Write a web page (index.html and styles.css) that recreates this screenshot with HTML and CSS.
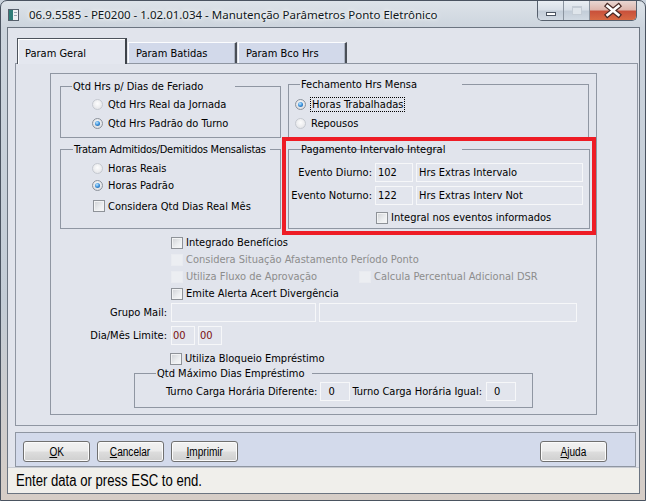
FILE: index.html
```html
<!DOCTYPE html>
<html lang="pt-BR">
<head>
  <meta charset="UTF-8">
  <title>Manutenção Parâmetros Ponto Eletrônico</title>
  <link rel="stylesheet" href="styles.css">
</head>
<body>
  <div class="window">
    <div class="titlebar">
      <svg class="app-icon" viewBox="0 0 11 12" width="11" height="12">
        <rect x="0.5" y="0.5" width="10" height="11" fill="#eef1f4" stroke="#56606c"/>
        <rect x="1" y="1" width="4" height="10" fill="#2f7d78"/>
        <rect x="6" y="3" width="3" height="1" fill="#9aa6b2"/>
        <rect x="6" y="6" width="3" height="1" fill="#9aa6b2"/>
      </svg>
      <span class="title">06.9.5585 - PE0200 - 1.02.01.034 - Manutenção Parâmetros Ponto Eletrônico</span>
      <div class="caption">
        <span class="cap-btn cap-min"><i></i></span>
        <span class="cap-btn cap-max"><i></i></span>
        <span class="cap-btn cap-close">
          <svg viewBox="0 0 46 19" width="46" height="19">
            <path d="M17.5 5 L28.5 14 M28.5 5 L17.5 14" stroke="#4a2a26" stroke-width="5" stroke-linecap="square"/>
            <path d="M17.5 5 L28.5 14 M28.5 5 L17.5 14" stroke="#ffffff" stroke-width="2.6" stroke-linecap="square"/>
          </svg>
        </span>
      </div>
    </div>

    <div class="client">
      <div class="tabs">
        <div class="tab active">Param Geral</div>
        <div class="tab">Param Batidas</div>
        <div class="tab">Param Bco Hrs</div>
      </div>

      <div class="tab-panel">
        <div class="frame">
          <div class="groups">
            <fieldset class="group feriado">
              <legend class="lg-feriado">Qtd Hrs p/ Dias de Feriado</legend>
              <label class="radio"><i></i>Qtd Hrs Real da Jornada</label>
              <label class="radio on"><i></i>Qtd Hrs Padrão do Turno</label>
            </fieldset>

            <fieldset class="group fechamento">
              <legend class="lg-fechamento">Fechamento Hrs Mensa</legend>
              <label class="radio on"><i></i><span class="focus">Horas Trabalhadas</span></label>
              <label class="radio"><i></i>Repousos</label>
            </fieldset>

            <fieldset class="group tratam">
              <legend class="lg-tratam">Tratam Admitidos/Demitidos Mensalistas</legend>
              <label class="radio"><i></i>Horas Reais</label>
              <label class="radio on"><i></i>Horas Padrão</label>
              <label class="check"><i></i>Considera Qtd Dias Real Mês</label>
            </fieldset>

            <fieldset class="group pagamento">
              <legend class="lg-pagamento">Pagamento Intervalo Integral</legend>
              <div class="evento-grid">
                <span class="lbl">Evento Diurno:</span>
                <input class="field" type="text" value="102" readonly>
                <input class="field" type="text" value="Hrs Extras Intervalo" readonly>
                <span class="lbl">Evento Noturno:</span>
                <input class="field" type="text" value="122" readonly>
                <input class="field" type="text" value="Hrs Extras Interv Not" readonly>
                <label class="check integral"><i></i>Integral nos eventos informados</label>
              </div>
            </fieldset>
          </div>

          <div class="options">
            <label class="check"><i></i>Integrado Benefícios</label>
            <label class="check disabled"><i></i>Considera Situação Afastamento Período Ponto</label>
            <div class="opt-pair">
              <label class="check disabled fluxo"><i></i>Utiliza Fluxo de Aprovação</label>
              <label class="check disabled"><i></i>Calcula Percentual Adicional DSR</label>
            </div>
            <label class="check"><i></i>Emite Alerta Acert Divergência</label>
          </div>

          <div class="fields">
            <span class="lbl">Grupo Mail:</span>
            <div class="field-row">
              <input class="field mail-cod" type="text" readonly>
              <input class="field mail-desc" type="text" readonly>
            </div>
            <span class="lbl">Dia/Mês Limite:</span>
            <div class="field-row">
              <input class="field day" type="text" value="00" readonly>
              <input class="field day" type="text" value="00" readonly>
            </div>
          </div>

          <label class="check bloqueio"><i></i>Utiliza Bloqueio Empréstimo</label>

          <fieldset class="group emprestimo">
            <legend class="lg-emprestimo">Qtd Máximo Dias Empréstimo</legend>
            <div class="turno-row">
              <span>Turno Carga Horária Diferente:</span>
              <input class="field num" type="text" value="0" readonly>
              <span class="turno-igual">Turno Carga Horária Igual:</span>
              <input class="field num" type="text" value="0" readonly>
            </div>
          </fieldset>
        </div>
      </div>

      <div class="button-bar">
        <button class="btn"><span><u>O</u>K</span></button>
        <button class="btn"><span><u>C</u>ancelar</span></button>
        <button class="btn"><span><u>I</u>mprimir</span></button>
        <button class="btn help"><span><u>A</u>juda</span></button>
      </div>

      <div class="status"><span>Enter data or press ESC to end.</span></div>
    </div>
  </div>
</body>
</html>
```

FILE: styles.css
```css
* {
  margin: 0;
  padding: 0;
  box-sizing: border-box;
}

html, body {
  width: 646px;
  height: 501px;
  overflow: hidden;
}

body {
  font-family: "DejaVu Sans Condensed", "Liberation Sans", sans-serif;
  font-size: 11px;
  color: #000;
  background: #c9d2dc;
}

.window {
  width: 646px;
  height: 501px;
  display: flex;
  flex-direction: column;
  border: 1px solid #4a5360;
  border-radius: 7px 7px 0 0;
  background: linear-gradient(to bottom, #dde3e9 0, #ccd4dd 27px, #c3ccd6 60%, #d6cdc6 100%);
  overflow: hidden;
}

/* title bar */
.titlebar {
  height: 27px;
  display: flex;
  align-items: center;
  padding-left: 7px;
  flex-shrink: 0;
}

.app-icon {
  display: block;
  margin-top: 1px;
}

.title {
  margin-left: 10px;
  font-family: "Noto Sans", "Open Sans", sans-serif;
  font-size: 11.5px;
  color: #101820;
  text-shadow: 0 0 6px #fff, 0 0 3px #fff;
  white-space: nowrap;
}

.caption {
  display: flex;
  align-self: flex-start;
  margin-left: auto;
  margin-right: 8px;
  border: 1px solid #56606d;
  border-top: none;
  border-radius: 0 0 5px 5px;
  overflow: hidden;
}

.cap-btn {
  height: 19px;
  display: flex;
  align-items: center;
  justify-content: center;
}

.cap-min, .cap-max {
  width: 26px;
  background: linear-gradient(to bottom, #e9eef3 0, #d9e0e8 45%, #c3cdd8 55%, #d1dae3 100%);
  border-right: 1px solid #8a939e;
}

.cap-min i {
  width: 10px;
  height: 4px;
  margin-top: 6px;
  background: #fff;
  border: 1px solid #4b5562;
}

.cap-max i {
  width: 10px;
  height: 9px;
  border: 1px solid #c4ccd5;
  border-top-width: 2px;
  background: #dfe5eb;
}

.cap-close {
  width: 46px;
  background: linear-gradient(to bottom, #e8d6d2 0, #deb7ae 45%, #c9513b 55%, #d86a44 100%);
}

.cap-close svg {
  display: block;
}

/* client area */
.client {
  flex: 1;
  margin: 0 6px 7px 7px;
  display: flex;
  flex-direction: column;
  background: #e1e4ec;
  box-shadow: 0 0 0 1px #6b7480;
}

.tabs {
  display: flex;
  align-items: flex-end;
  height: 25px;
  margin-top: 10px;
  margin-left: 9px;
}

.tab {
  width: 109px;
  height: 21px;
  margin-left: 1px;
  padding: 4px 0 0 7px;
  line-height: 13px;
  background: #d2d9ea;
  border-top: 1px solid #fbfcfe;
  border-left: 1px solid #fbfcfe;
  border-right: 2px solid #4a4f57;
  box-shadow: inset -1px 0 0 #a9b1c1;
}

.tab.active {
  width: 110px;
  height: 26px;
  margin-left: 0;
  margin-bottom: -1px;
  padding-top: 8px;
  background: #e4e7ef;
  border-top: 1px solid #4d535c;
  border-left: 1px solid #4d535c;
  border-right: 2px solid #3e434a;
  box-shadow: inset 1px 1px 0 #fff;
  position: relative;
  z-index: 1;
}

.tab-panel {
  width: 623px;
  height: 363px;
  margin-left: 7px;
  padding: 9px 0 0 34px;
  border: 1px solid #8f96a2;
  background: #e1e4ec;
}

.frame {
  width: 547px;
  height: 342px;
  border: 1px solid #8f96a2;
}

/* group boxes */
.groups {
  display: grid;
  grid-template-columns: 221px 301px;
  column-gap: 7px;
  row-gap: 5px;
  align-items: start;
  padding: 4px 0 0 9px;
}

.group {
  border: 1px solid #8f96a2;
  min-width: 0;
}

.group legend {
  font-size: 11px;
  line-height: 13px;
  padding: 0 1px;
  margin-left: 11px;
  white-space: nowrap;
}

.lg-feriado { width: 163px; }
.group .lg-tratam { width: 197px; margin-left: 12px; letter-spacing: -0.25px; }
.lg-fechamento { width: 162px; }
.group .lg-emprestimo { width: 156px; margin-left: 21px; }

.lg-pagamento {
  width: 162px;
  background: linear-gradient(#8f96a2, #8f96a2) no-repeat 0 6px / 143px 1px;
}

.feriado {
  height: 58px;
  margin-top: 2px;
  padding-top: 2px;
}

.feriado .radio,
.tratam .radio {
  margin-left: 31px;
}

.fechamento {
  height: 60px;
  padding-top: 4px;
}

.fechamento .radio {
  margin-left: 6px;
}

.tratam {
  height: 86px;
  padding-top: 3px;
}

.pagamento {
  height: 86px;
  width: 302px;
  outline: 4px solid #ee1c25;
  outline-offset: 2px;
}

/* radios and checkboxes */
.radio, .check {
  display: flex;
  align-items: center;
  white-space: nowrap;
}

.radio {
  height: 19px;
  gap: 5px;
}

.tratam .radio {
  height: 18px;
}

.tratam .radio + .radio {
  height: 17px;
}

.radio i {
  width: 11px;
  height: 11px;
  flex-shrink: 0;
  border-radius: 50%;
  border: 1px solid #c5c9d0;
  background: radial-gradient(circle at 50% 40%, #fdfdfd 0, #e6e7ea 75%);
  display: flex;
  align-items: center;
  justify-content: center;
}

.radio.on i {
  border-color: #8c929b;
  background: radial-gradient(circle at 50% 40%, #fafafa 0, #dcdde1 80%);
}

.radio.on i::after {
  content: "";
  width: 5px;
  height: 5px;
  border-radius: 50%;
  background: radial-gradient(circle at 40% 35%, #c3e9ff 0, #3a91dc 50%, #17508f 100%);
}

.focus {
  outline: 1px dotted #000;
  padding: 0 1px;
}

.check {
  height: 17px;
  gap: 3px;
}

.check i {
  width: 12px;
  height: 12px;
  flex-shrink: 0;
  border: 1px solid #8e9298;
  background: linear-gradient(135deg, #cfd1d5 0, #eceef0 60%, #f8f8f9 100%);
  box-shadow: inset 0 0 0 1px #f2f3f4;
}

.check.disabled {
  color: #8d8d8d;
}

.check.disabled i {
  border-color: #e9ebf0;
  background: #eceef2;
  box-shadow: none;
}

.tratam .check {
  height: 18px;
  margin-top: 3px;
  margin-left: 32px;
}

/* text fields */
.field {
  display: block;
  height: 19px;
  padding: 0 2px;
  font: inherit;
  color: #000;
  background: #e2e5ed;
  border: 1px solid #f6f7f9;
  outline: none;
}

.lbl {
  text-align: right;
  white-space: nowrap;
}

.evento-grid {
  display: grid;
  grid-template-columns: 83px 38px 167px;
  column-gap: 3px;
  row-gap: 4px;
  align-items: center;
  padding-top: 7px;
}

.integral {
  grid-column: 2 / 4;
  margin-left: 1px;
}

.options {
  margin: 5px 0 0 120px;
}

.opt-pair {
  display: flex;
}

.fluxo {
  width: 188px;
}

.fields {
  display: grid;
  grid-template-columns: 116px auto;
  column-gap: 4px;
  row-gap: 4px;
  align-items: center;
  margin-top: 1px;
}

.field-row {
  display: flex;
  gap: 3px;
}

.mail-cod { width: 145px; }
.mail-desc { width: 258px; }

.day {
  width: 24px;
  padding-left: 1px;
  color: #7a1010;
}

.bloqueio {
  margin: 5px 0 0 119px;
}

.emprestimo {
  width: 399px;
  height: 41px;
  margin-left: 83px;
  padding-top: 2px;
}

.turno-row {
  display: flex;
  align-items: center;
  margin-left: 31px;
  white-space: nowrap;
}

.num {
  width: 30px;
  margin-left: 3px;
  padding-left: 7px;
}

.turno-igual {
  margin-left: 2px;
  margin-right: 1px;
}

/* bottom buttons */
.button-bar {
  width: 621px;
  height: 35px;
  margin: 6px 0 0 7px;
  padding: 8px 0 0 7px;
  display: flex;
  align-items: flex-start;
  gap: 7px;
  background: #d3daeb;
  border: 1px solid #8f96a2;
}

.btn {
  width: 67px;
  height: 21px;
  font-family: "Liberation Sans", sans-serif;
  font-size: 12px;
  color: #000;
  border: 1px solid #707070;
  border-radius: 3px;
  background: linear-gradient(to bottom, #f2f2f2 0, #ebebeb 48%, #dddddd 52%, #cfcfcf 100%);
  box-shadow: inset 0 0 0 1px #fbfbfb;
}

.btn span {
  display: inline-block;
  transform: scaleX(0.84);
}

.btn.help {
  margin-left: auto;
  margin-right: 28px;
}

.status {
  flex: 1;
  padding: 4px 0 0 8px;
  font-family: "Liberation Sans", sans-serif;
  font-size: 16px;
  line-height: 18px;
  background: #f0efeb;
  border-top: 1px solid #c9ccd2;
}

.status span {
  display: inline-block;
  transform: scaleX(0.82);
  transform-origin: left center;
  white-space: nowrap;
}
```
